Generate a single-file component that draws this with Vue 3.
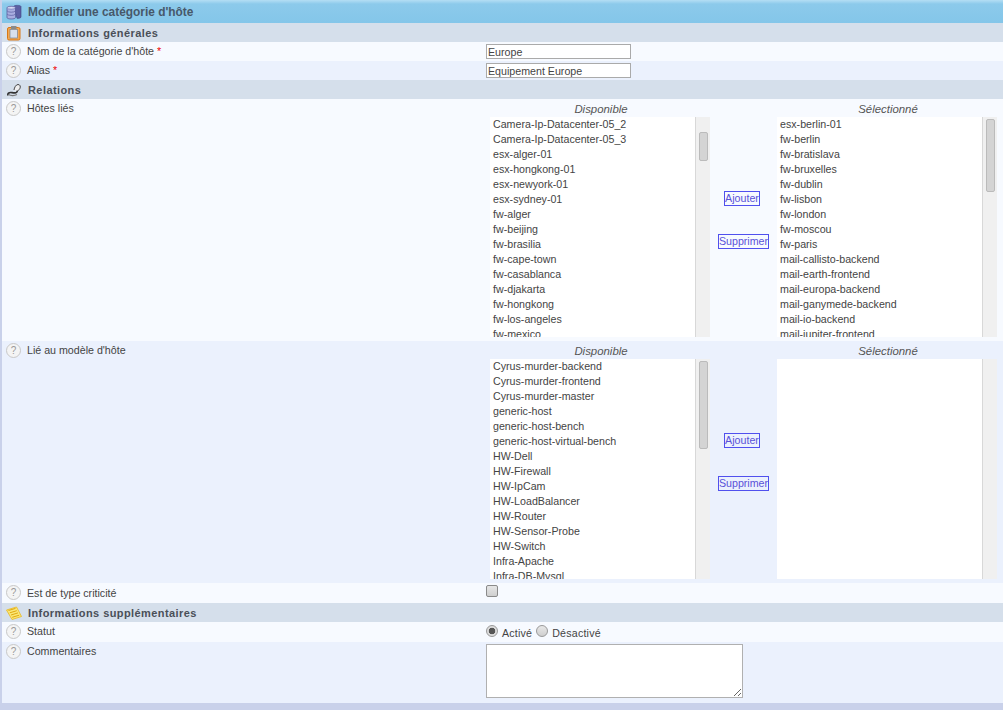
<template>
  <div class="form-page">
    <div class="title-bar">
      <svg class="head-icon" viewBox="0 0 16 16">
        <path d="M7.500 2.500C7.500 1 15 1 15 2.500v10.500c0 1.300-3 1.500-4 1.300z" fill="#5c60a4" stroke="#3c4080" stroke-width=".6" />
        <path d="M1 3.800c0-2 8.500-2 8.500 0v9.700c0 2-8.500 2-8.500 0z" fill="#a9aee0" stroke="#4c5094" stroke-width=".7" />
        <ellipse cx="5.250" cy="3.800" rx="4" ry="1.300" fill="#d9dcf6" stroke="#5a5ea0" stroke-width=".5" />
        <path d="M1.200 7c1 1.600 7 1.600 8.100 0M1.200 10.200c1 1.600 7 1.600 8.100 0" fill="none" stroke="#5a5ea0" stroke-width=".7" />
      </svg>
      <span>Modifier une catégorie d'hôte</span>
    </div>

    <div class="section-head">
      <svg class="head-icon" viewBox="0 0 16 16">
        <rect x="1.500" y="2.500" width="12.500" height="12.500" rx="1.500" fill="#f4a850" stroke="#d87818" />
        <rect x="4" y="4.500" width="7.500" height="8.500" fill="#d8e0ec" stroke="#7a8494" stroke-width=".7" />
        <rect x="5" y="1" width="5.500" height="3" fill="#8a8a8a" />
      </svg>
      <span>Informations générales</span>
    </div>
    <div class="row odd">
      <div class="label"><i class="help">?</i>Nom de la catégorie d'hôte<em>*</em></div>
      <div class="field"><input class="text-input" type="text" value="Europe" /></div>
    </div>
    <div class="row even">
      <div class="label"><i class="help">?</i>Alias<em>*</em></div>
      <div class="field"><input class="text-input" type="text" value="Equipement Europe" /></div>
    </div>

    <div class="section-head">
      <svg class="head-icon" viewBox="0 0 16 16">
        <path d="M2 13.500c-.8-1.800 1-3.200 3-3 1.500.2 3 .8 5 .2 1.600-.5 1.500-2.200.6-3.200" fill="none" stroke="#333" stroke-width="1.700" />
        <path d="M2.500 12.500c2 1.300 6 1.500 8.500 0" fill="none" stroke="#777" stroke-width="1.300" />
        <path d="M8 8c.3-2.500 2-5.500 4-5.500s3 2 1.800 4.200c-.8 1.400-2 2.300-3.300 2.300" fill="#f0f0f0" stroke="#444" stroke-width="1" />
      </svg>
      <span>Relations</span>
    </div>
    <div class="row odd tall">
      <div class="label"><i class="help">?</i>Hôtes liés</div>
      <div class="field">
        <div class="picker">
          <div class="picker-col">
            <div class="caption">Disponible</div>
            <div class="listbox">
              <ul class="items">
                <li v-for="name in hostsFree" :key="name">{{ name }}</li>
              </ul>
              <div class="track"><div class="thumb thumb-small"></div></div>
            </div>
          </div>
          <div class="actions">
            <button class="act" type="button">Ajouter</button>
            <button class="act" type="button">Supprimer</button>
          </div>
          <div class="picker-col">
            <div class="caption">Sélectionné</div>
            <div class="listbox">
              <ul class="items">
                <li v-for="name in hostsPicked" :key="name">{{ name }}</li>
              </ul>
              <div class="track"><div class="thumb thumb-top"></div></div>
            </div>
          </div>
        </div>
      </div>
    </div>
    <div class="row even tall">
      <div class="label"><i class="help">?</i>Lié au modèle d'hôte</div>
      <div class="field">
        <div class="picker">
          <div class="picker-col">
            <div class="caption">Disponible</div>
            <div class="listbox">
              <ul class="items">
                <li v-for="name in templates" :key="name">{{ name }}</li>
              </ul>
              <div class="track"><div class="thumb thumb-large"></div></div>
            </div>
          </div>
          <div class="actions">
            <button class="act" type="button">Ajouter</button>
            <button class="act" type="button">Supprimer</button>
          </div>
          <div class="picker-col">
            <div class="caption">Sélectionné</div>
            <div class="listbox">
              <ul class="items"></ul>
              <div class="track"></div>
            </div>
          </div>
        </div>
      </div>
    </div>
    <div class="row odd check-row">
      <div class="label label-low"><i class="help">?</i>Est de type criticité</div>
      <div class="field"><input class="check" type="checkbox" /></div>
    </div>

    <div class="section-head">
      <svg class="head-icon" viewBox="0 0 16 16">
        <path d="M.5 5 10.500 2 15.500 11.500 6 14.500z" fill="#fbe878" stroke="#e8b820" stroke-width=".8" />
        <path d="M2.500 5.500 9.500 3.400M3.800 7.800l7-2.100M5 10l7-2.100M6.200 12.300l7-2.100" stroke="#e0a810" stroke-width="1" />
      </svg>
      <span>Informations supplémentaires</span>
    </div>
    <div class="row odd check-row">
      <div class="label"><i class="help">?</i>Statut</div>
      <div class="field radios">
        <input class="radio" type="radio" name="statut" checked />
        <span>Activé</span>
        <input class="radio" type="radio" name="statut" />
        <span>Désactivé</span>
      </div>
    </div>
    <div class="row even comment-row">
      <div class="label"><i class="help">?</i>Commentaires</div>
      <div class="field"><textarea class="comment"></textarea></div>
    </div>
    <div class="footer"></div>
  </div>
</template>

<script setup>
const hostsFree = [
  'Camera-Ip-Datacenter-05_2', 'Camera-Ip-Datacenter-05_3', 'esx-alger-01', 'esx-hongkong-01',
  'esx-newyork-01', 'esx-sydney-01', 'fw-alger', 'fw-beijing', 'fw-brasilia', 'fw-cape-town',
  'fw-casablanca', 'fw-djakarta', 'fw-hongkong', 'fw-los-angeles', 'fw-mexico'
];
const hostsPicked = [
  'esx-berlin-01', 'fw-berlin', 'fw-bratislava', 'fw-bruxelles', 'fw-dublin', 'fw-lisbon',
  'fw-london', 'fw-moscou', 'fw-paris', 'mail-callisto-backend', 'mail-earth-frontend',
  'mail-europa-backend', 'mail-ganymede-backend', 'mail-io-backend', 'mail-jupiter-frontend'
];
const templates = [
  'Cyrus-murder-backend', 'Cyrus-murder-frontend', 'Cyrus-murder-master', 'generic-host',
  'generic-host-bench', 'generic-host-virtual-bench', 'HW-Dell', 'HW-Firewall', 'HW-IpCam',
  'HW-LoadBalancer', 'HW-Router', 'HW-Sensor-Probe', 'HW-Switch', 'Infra-Apache', 'Infra-DB-Mysql'
];
</script>

<style>
body {
  background: #fff;
}
</style>

<style scoped>
.form-page {
  width: 1003px;
  height: 710px;
  overflow: hidden;
  box-sizing: border-box;
  border-left: 2px solid #c9d1ea;
  font-family: "Liberation Sans", Arial, sans-serif;
  font-size: 10.67px;
  color: #444;
}

.title-bar {
  display: flex;
  align-items: center;
  height: 23px;
  box-sizing: border-box;
  padding-left: 4px;
  background: linear-gradient(#b4def4 0, #8ccaeb 4px, #84c6e9 100%);
  font-size: 11.9px;
  font-weight: bold;
  color: #47586a;
}

.section-head {
  display: flex;
  align-items: center;
  height: 19px;
  padding-left: 4px;
  background: #d5dfeb;
  font-size: 11px;
  font-weight: bold;
  color: #4a4f58;
  letter-spacing: 0.42px;
}

.head-icon {
  width: 16px;
  height: 16px;
  margin-right: 6px;
  flex: none;
}

.row {
  display: flex;
  height: 19px;
}

.row.odd {
  background: #f7faff;
}

.row.even {
  background: #ebf1fd;
}

.row.tall {
  height: 242px;
}

.row.check-row {
  height: 20px;
}

.row.comment-row {
  height: 61px;
}

.label {
  display: flex;
  align-items: flex-start;
  width: 484px;
  flex: none;
  box-sizing: border-box;
  padding: 2px 0 0 4px;
  line-height: 14px;
}

.label-low {
  line-height: 16px;
}

.label em {
  margin-left: 3px;
  color: #e00;
  font-style: normal;
}

.help {
  display: block;
  width: 13px;
  height: 13px;
  margin-right: 6px;
  flex: none;
  border: 1px solid #c8c8c8;
  border-radius: 50%;
  background: #f4f4f4;
  color: #999;
  font-size: 10px;
  font-style: normal;
  line-height: 13px;
  text-align: center;
}

.field {
  flex: 1;
  min-width: 0;
}

.text-input {
  display: block;
  width: 145px;
  height: 15px;
  margin-top: 2px;
  padding: 0 1px;
  box-sizing: border-box;
  border: 1px solid #aaa;
  background: #fff;
  font: 10.67px "Liberation Sans", Arial, sans-serif;
  color: #444;
}

.picker {
  display: flex;
  padding: 4px 0 0 4px;
}

.picker-col {
  width: 220px;
  flex: none;
}

.caption {
  height: 14px;
  padding-left: 2px;
  line-height: 12px;
  text-align: center;
  font-size: 11.4px;
  font-style: italic;
  color: #555;
}

.listbox {
  display: flex;
  height: 220px;
  overflow: hidden;
}

.items {
  flex: 1;
  margin: 0;
  padding: 0 0 0 3px;
  list-style: none;
  background: #fff;
  overflow: hidden;
}

.items li {
  height: 15px;
  line-height: 15px;
  white-space: nowrap;
}

.track {
  width: 15px;
  flex: none;
  box-sizing: border-box;
  padding: 2px 2px 0 3px;
  border-left: 1px solid #d8d8d8;
  background: #f0f0f0;
}

.thumb {
  height: 27px;
  border: 1px solid #bbb;
  border-radius: 2px;
  background: #d4d4d4;
}

.thumb-small {
  margin-top: 13px;
}

.thumb-top {
  height: 71px;
}

.thumb-large {
  height: 86px;
}

.actions {
  display: flex;
  flex-direction: column;
  align-items: center;
  width: 67px;
  flex: none;
  padding-top: 88px;
  gap: 28px;
}

.act {
  height: 15px;
  padding: 0;
  border: 1px solid #5050ee;
  background: transparent;
  font: 10.67px "Liberation Sans", Arial, sans-serif;
  line-height: 13px;
  color: #5a52d8;
}

.act:first-child {
  margin-right: 3px;
}

.check {
  display: block;
  width: 12px;
  height: 12px;
  margin: 2px 0 0;
  appearance: none;
  border: 1px solid #8a8a8a;
  border-radius: 2px;
  background: linear-gradient(#e6e6e6, #cfcfcf);
}

.radios {
  display: flex;
  align-items: center;
  gap: 4px;
  height: 20px;
}

.radios span {
  margin-top: 2px;
  letter-spacing: 0.2px;
}

.radio {
  width: 12px;
  height: 12px;
  margin: 0 0 3px;
  appearance: none;
  border: 1px solid #999;
  border-radius: 50%;
  background: linear-gradient(#e8e8e8, #cfcfcf);
}

.radio:checked {
  background: radial-gradient(circle, #555 0, #555 3px, #ddd 3.6px);
}

.comment {
  display: block;
  width: 257px;
  height: 54px;
  margin: 2px 0 0;
  padding: 0 2px;
  box-sizing: border-box;
  border: 1px solid #b0b0b0;
  background: #fff;
}

.footer {
  height: 7px;
  background: #c9d1ea;
}
</style>
